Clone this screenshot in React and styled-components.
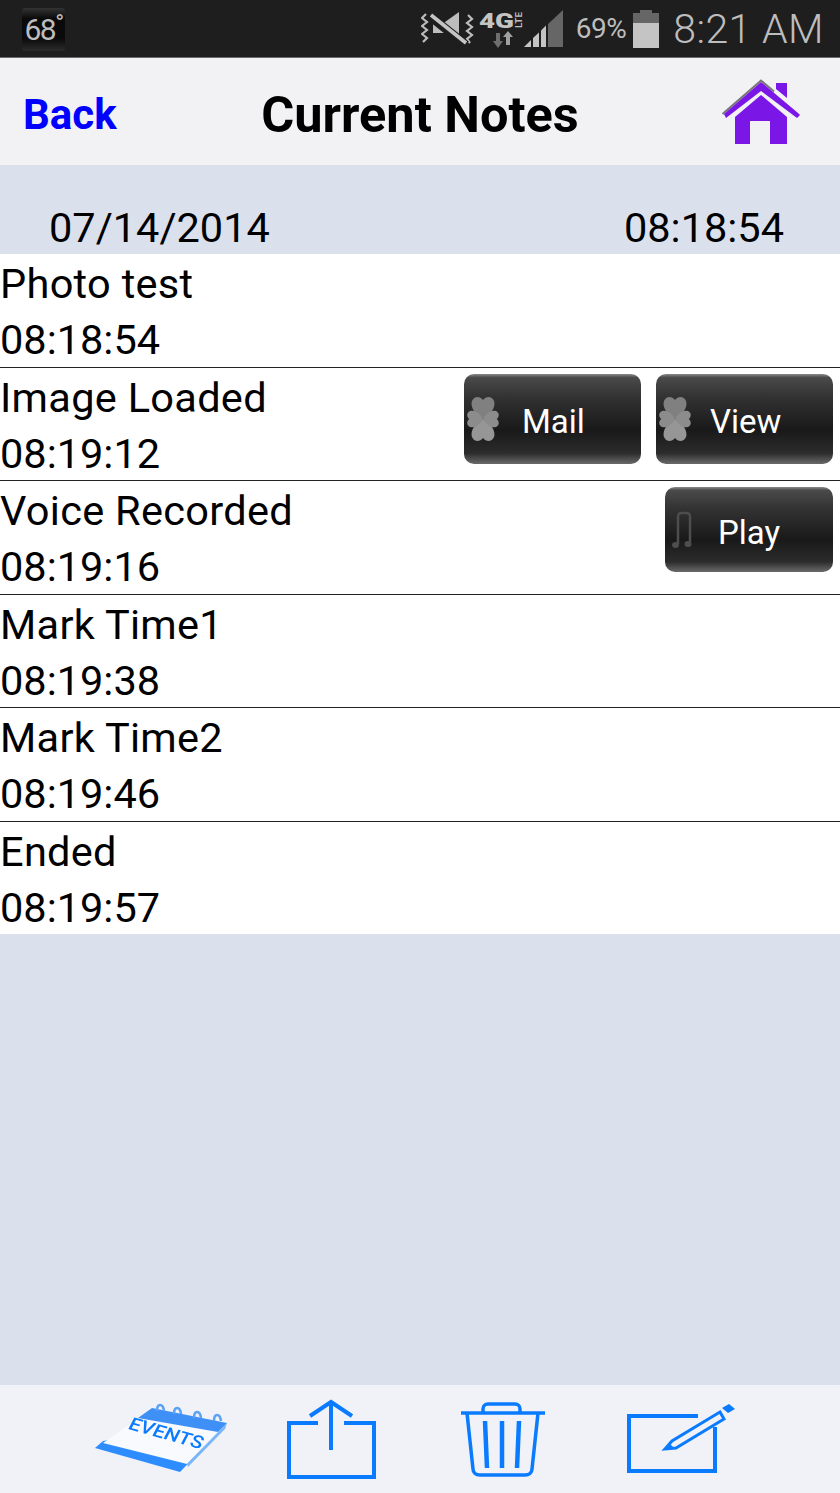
import styled, { createGlobalStyle } from 'styled-components';

const GlobalStyle = createGlobalStyle`
  html, body {
    margin: 0;
    padding: 0;
    background: #dbe1ec;
    font-family: Roboto, "Liberation Sans", sans-serif;
  }
`;

const Screen = styled.div`
  width: 840px;
  height: 1493px;
  display: flex;
  flex-direction: column;
  background: #dbe1ec;
  overflow: hidden;
`;

const StatusBar = styled.div`
  height: 57px;
  flex: none;
  display: flex;
  align-items: center;
  justify-content: space-between;
  padding: 0 16px 0 22px;
  background: #1e1e1e;
  border-bottom: 1px solid #6a6a6a;
`;

const WeatherTile = styled.div`
  width: 43px;
  height: 43px;
  margin-top: 1px;
  display: flex;
  align-items: center;
  justify-content: center;
  border-radius: 3px;
  background: linear-gradient(#333333, #0a0a0a 25%, #0a0a0a 70%, #2c2c2c);
  color: #bdbdbd;
  font-size: 30px;
  letter-spacing: -1.5px;
`;

const Degree = styled.span`
  font-size: 24px;
  line-height: 1;
  margin-top: -12px;
`;

const StatusRight = styled.div`
  display: flex;
  align-items: center;
`;

const MuteSlot = styled.div`
  display: flex;
  margin-right: 5px;
`;

const Percent = styled.span`
  color: #bdbdbd;
  font-size: 28px;
  font-weight: 400;
  letter-spacing: -0.5px;
  margin: 0 7px 0 13px;
`;

const Clock = styled.span`
  color: #bdbdbd;
  font-size: 41px;
  font-weight: 300;
  margin-left: 14px;
  letter-spacing: 0.4px;
`;

const NavBar = styled.div`
  height: 107px;
  flex: none;
  display: grid;
  grid-template-columns: 1fr auto 1fr;
  align-items: center;
  padding: 5px 24px 0;
  box-sizing: border-box;
  background: #f2f2f5;
`;

const BackLink = styled.a`
  margin-left: -1px;
  color: #0000ff;
  font-size: 42px;
  font-weight: 700;
`;

const Title = styled.h1`
  margin: 0;
  color: #000000;
  font-size: 50.5px;
  font-weight: 700;
`;

const HomeSlot = styled.div`
  display: flex;
  justify-content: flex-end;
  padding-right: 15px;
  margin-top: -3px;
`;

const DateHeader = styled.div`
  height: 89px;
  flex: none;
  box-sizing: border-box;
  display: flex;
  align-items: flex-end;
  justify-content: space-between;
  padding: 0 56px 2px 49px;
  color: #000000;
  font-size: 41.5px;
  line-height: 48px;
`;

const NoteList = styled.div`
  flex: none;
  height: 680px;
  overflow: hidden;
  background: #ffffff;
`;

const NoteRow = styled.div`
  height: 113.6px;
  box-sizing: border-box;
  display: flex;
  align-items: flex-start;
  justify-content: space-between;
  padding: 2px 7px 0 0;
  border-bottom: 1px solid ${(p) => (p.$last ? 'transparent' : '#222222')};
`;

const NoteText = styled.div`
  color: #000000;
  font-size: 41.5px;
  line-height: 56px;
`;

const NoteLabel = styled.div`
  letter-spacing: 0.3px;
`;

const ButtonGroup = styled.div`
  display: flex;
  gap: 15px;
  margin-top: ${(p) => p.$top}px;
`;

const ActionButton = styled.button`
  width: ${(p) => p.$width}px;
  height: ${(p) => p.$height}px;
  box-sizing: border-box;
  padding: 6px 0 0 ${(p) => p.$textInset}px;
  display: flex;
  align-items: center;
  position: relative;
  border: none;
  border-radius: 10px;
  background: linear-gradient(#8a8a8a 0, #4a4a4a 4%, #333333 25%, #191919 62%, #2c2c2c 88%, #6a6a6a 100%);
  color: #ffffff;
  font-family: inherit;
  font-size: 33px;
  font-weight: 400;

  svg {
    position: absolute;
    left: ${(p) => p.$iconLeft}px;
    top: 50%;
    transform: translateY(-50%);
    filter: blur(0.6px);
  }
`;

const Toolbar = styled.div`
  margin-top: auto;
  height: 108px;
  flex: none;
  box-sizing: border-box;
  display: flex;
  align-items: center;
  padding: 0 0 0 95px;
  background: #f0f2f7;
`;

const ToolButton = styled.div`
  display: flex;
  margin-left: ${(p) => p.$gap || 0}px;
  filter: ${(p) => (p.$soft ? 'blur(0.6px)' : 'none')};
`;

const BLUE = '#0a7bff';

const MuteIcon = () => (
  <svg width="53" height="36" viewBox="0 0 53 36">
    <path d="M5 3L1 7l5 4-5 4 5 4-5 4 5 4-4 4M47 4l4 4-5 4 5 4-5 4 5 4-5 4 3 4" fill="none" stroke="#bdbdbd" strokeWidth="2.2" />
    <path d="M12 11h12L38 1v31L24 22H12z" fill="#bdbdbd" />
    <path d="M10 6l35 28" stroke="#1e1e1e" strokeWidth="9" />
    <path d="M10 4l35 28" stroke="#c4c4c4" strokeWidth="3.6" />
  </svg>
);

const NetworkIcon = () => (
  <svg width="45" height="44" viewBox="0 0 45 44">
    <text x="0" y="21" textLength="35" lengthAdjust="spacingAndGlyphs" fontFamily="Roboto, sans-serif" fontSize="20" fontWeight="900" fill="#c4c4c4">4G</text>
    <text x="0" y="0" transform="translate(43 21) rotate(-90)" textLength="16" lengthAdjust="spacingAndGlyphs" fontFamily="Roboto, sans-serif" fontSize="9" fontWeight="700" fill="#bdbdbd">LTE</text>
    <path d="M17 26v8h-3l5 7 5-7h-3v-8z" fill="#6e6e6e" />
    <path d="M27 38v-8h-3l5-6 5 6h-3v8z" fill="#a0a0a0" />
  </svg>
);

const SignalIcon = () => (
  <svg width="39" height="38" viewBox="0 0 39 38">
    <path d="M39 0v37H24V14z" fill="#666666" />
    <path d="M22 15.5V37h-5V20.5z" fill="#c4c4c4" />
    <path d="M15 22.5V37H9V28z" fill="#c4c4c4" />
    <path d="M7 30v7H0z" fill="#c4c4c4" />
  </svg>
);

const BatteryIcon = () => (
  <svg width="26" height="38" viewBox="0 0 26 38">
    <path d="M7 0h12v3h7v10H0V3h7z" fill="#666666" />
    <rect y="13" width="26" height="25" fill="#c4c4c4" />
  </svg>
);

const HomeIcon = () => (
  <svg width="80" height="68" viewBox="0 0 80 68">
    <path d="M1.5 35L40 1.5l13 11" fill="none" stroke="#777777" strokeWidth="2" />
    <path d="M55 4h11v15L55 10z" fill="#7a16e6" />
    <path d="M3 35L40 3l37 31 2 2-3 3L40 12 5 39z" fill="#7a16e6" />
    <path d="M14 38l26-22 26 22v27H49V42H29v23H14z" fill="#7a16e6" />
  </svg>
);

const CLOVER_LOBE = 'M17 23C9 19 4 11 6 5c2-5 8-5 11-1 3-4 9-4 11 1 2 6-3 14-11 18z';

const CloverIcon = () => (
  <svg width="34" height="46" viewBox="0 0 34 46">
    <path d={CLOVER_LOBE} fill="#808080" />
    <path d={CLOVER_LOBE} fill="#969696" transform="rotate(180 17 23)" />
    <path d={CLOVER_LOBE} fill="#8c8c8c" transform="translate(17 23) scale(.72) rotate(90) translate(-17 -23)" />
    <path d={CLOVER_LOBE} fill="#8c8c8c" transform="translate(17 23) scale(.72) rotate(-90) translate(-17 -23)" />
  </svg>
);

const MusicIcon = () => (
  <svg width="22" height="38" viewBox="0 0 22 38">
    <path d="M6 33V6c0-3 1-4 4-4h4c3 0 4 1 4 4v25" fill="none" stroke="#4e4e4e" strokeWidth="2.5" />
    <ellipse cx="3.5" cy="34" rx="3.5" ry="3" fill="#4e4e4e" />
    <ellipse cx="16" cy="33" rx="3.5" ry="3" fill="#4e4e4e" />
  </svg>
);

const EventsIcon = () => (
  <svg width="134" height="74" viewBox="0 0 134 74">
    <path d="M0 46L8 39 132 21 85 70z" fill={BLUE} opacity=".85" />
    <path d="M8 41L57 7l75 14-40 41z" fill="#f8fafd" />
    <path d="M57 6l75 15-9 9-80-14z" fill="#3f90f6" />
    <path d="M92 62l40-41-2 6-37 38z" fill="#7db6f8" />
    <g fill="none" stroke="#5aa2f5" strokeWidth="2.5">
      <path d="M62 9c0-8 6-8 7 0" />
      <path d="M79 12c0-8 6-8 7 0" />
      <path d="M99 16c0-8 6-8 7 0" />
      <path d="M119 19c0-8 6-8 7 0" />
    </g>
    <text x="0" y="0" transform="translate(33 27) rotate(15.5)" textLength="76" lengthAdjust="spacingAndGlyphs" fontFamily="Roboto, sans-serif" fontStyle="italic" fontWeight="500" fontSize="18" fill={BLUE}>EVENTS</text>
  </svg>
);

const ShareIcon = () => (
  <svg width="90" height="80" viewBox="0 0 90 80" fill="none" stroke={BLUE} strokeWidth="4">
    <path d="M32 24H3v54h85V24H58" />
    <path d="M45 51V3" />
    <path d="M24 17L45 3l21 14" />
  </svg>
);

const TrashIcon = () => (
  <svg width="86" height="76" viewBox="0 0 86 76" fill="none" stroke={BLUE} strokeWidth="3.5">
    <path d="M1 12h84" />
    <path d="M23 11V8c0-3 2-5 5-5h27c3 0 5 2 5 5v3" />
    <path d="M7 12l6 56c0 4 3 6 7 6h45c4 0 7-2 7-6l6-56" />
    <path d="M25 20l2 47M42 20v47M59 20l-2 47" strokeWidth="4.5" />
  </svg>
);

const ComposeIcon = () => (
  <svg width="110" height="72" viewBox="0 0 110 72" fill="none" stroke={BLUE} strokeWidth="4">
    <path d="M71 13H2v55h86V24" />
    <path d="M38 46l7-8L93 9l4 7-48 29z" strokeWidth="3" />
    <path d="M38 46l4-6 5 5z" fill={BLUE} stroke="none" />
    <path d="M95 5l7-4 6 5-7 4z" fill={BLUE} stroke="none" />
  </svg>
);

const NOTES = [
  { label: 'Photo test', time: '08:18:54' },
  {
    label: 'Image Loaded',
    time: '08:19:12',
    top: 4,
    buttons: [
      { text: 'Mail', width: 177, height: 90, inset: 58, iconLeft: 2, icon: <CloverIcon /> },
      { text: 'View', width: 177, height: 90, inset: 54, iconLeft: 2, icon: <CloverIcon /> },
    ],
  },
  {
    label: 'Voice Recorded',
    time: '08:19:16',
    top: 4,
    buttons: [{ text: 'Play', width: 168, height: 85, inset: 53, iconLeft: 7, icon: <MusicIcon /> }],
  },
  { label: 'Mark Time1', time: '08:19:38' },
  { label: 'Mark Time2', time: '08:19:46' },
  { label: 'Ended', time: '08:19:57' },
];

export default function App() {
  return (
    <Screen>
      <GlobalStyle />
      <StatusBar>
        <WeatherTile>
          68<Degree>°</Degree>
        </WeatherTile>
        <StatusRight>
          <MuteSlot>
            <MuteIcon />
          </MuteSlot>
          <NetworkIcon />
          <SignalIcon />
          <Percent>69%</Percent>
          <BatteryIcon />
          <Clock>8:21 AM</Clock>
        </StatusRight>
      </StatusBar>
      <NavBar>
        <BackLink>Back</BackLink>
        <Title>Current Notes</Title>
        <HomeSlot>
          <HomeIcon />
        </HomeSlot>
      </NavBar>
      <DateHeader>
        <span>07/14/2014</span>
        <span>08:18:54</span>
      </DateHeader>
      <NoteList>
        {NOTES.map((note, i) => (
          <NoteRow key={note.label} $last={i === NOTES.length - 1}>
            <NoteText>
              <NoteLabel>{note.label}</NoteLabel>
              {note.time}
            </NoteText>
            {note.buttons && (
              <ButtonGroup $top={note.top}>
                {note.buttons.map((b) => (
                  <ActionButton
                    key={b.text}
                    $width={b.width}
                    $height={b.height}
                    $textInset={b.inset}
                    $iconLeft={b.iconLeft}
                  >
                    {b.icon}
                    {b.text}
                  </ActionButton>
                ))}
              </ButtonGroup>
            )}
          </NoteRow>
        ))}
      </NoteList>
      <Toolbar>
        <ToolButton $soft>
          <EventsIcon />
        </ToolButton>
        <ToolButton $gap={57}>
          <ShareIcon />
        </ToolButton>
        <ToolButton $gap={84}>
          <TrashIcon />
        </ToolButton>
        <ToolButton $gap={81}>
          <ComposeIcon />
        </ToolButton>
      </Toolbar>
    </Screen>
  );
}
